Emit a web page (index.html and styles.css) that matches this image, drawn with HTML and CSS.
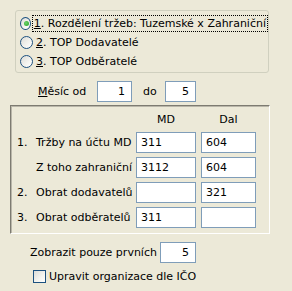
FILE: index.html
```html
<!DOCTYPE html>
<html lang="cs">
<head>
  <meta charset="UTF-8" />
  <title>Přehled tržeb</title>
  <link rel="stylesheet" href="styles.css">
</head>
<body>
<div class="group">
  <label class="radio-row">
    <span class="radio checked"></span>
    <span class="radio-text focus"><u>1</u>. Rozdělení tržeb: Tuzemské x Zahraniční</span>
  </label>
  <label class="radio-row">
    <span class="radio"></span>
    <span class="radio-text"><u>2</u>. TOP Dodavatelé</span>
  </label>
  <label class="radio-row">
    <span class="radio"></span>
    <span class="radio-text"><u>3</u>. TOP Odběratelé</span>
  </label>
</div>

<div class="month-row">
  <span class="month-label"><u>M</u>ěsíc od</span>
  <span class="field month-from">1</span>
  <span class="month-to">do</span>
  <span class="field month-until">5</span>
</div>

<div class="accounts">
  <div class="acc-head">
    <span></span><span></span>
    <span class="col-title">MD</span>
    <span class="col-title">Dal</span>
  </div>
  <div class="acc-row">
    <span class="num">1.</span>
    <span class="name">Tržby na účtu MD</span>
    <span class="field acc">311</span>
    <span class="field acc">604</span>
  </div>
  <div class="acc-row">
    <span class="num"></span>
    <span class="name">Z toho zahraniční</span>
    <span class="field acc">3112</span>
    <span class="field acc">604</span>
  </div>
  <div class="acc-row">
    <span class="num">2.</span>
    <span class="name">Obrat dodavatelů</span>
    <span class="field acc"></span>
    <span class="field acc">321</span>
  </div>
  <div class="acc-row">
    <span class="num">3.</span>
    <span class="name">Obrat odběratelů</span>
    <span class="field acc">311</span>
    <span class="field acc"></span>
  </div>
</div>

<div class="top-row">
  <span class="top-label">Zobrazit pouze prvních</span>
  <span class="field top-count">5</span>
</div>

<label class="check-row">
  <span class="checkbox"></span>
  <span>Upravit organizace dle IČO</span>
</label>
</body>
</html>
```

FILE: styles.css
```css
body {
  margin: 0;
  width: 292px;
  height: 291px;
  background: #ece9d8;
  color: #000;
  font-family: Tahoma, "DejaVu Sans", "Liberation Sans", sans-serif;
  font-size: 11px;
  overflow: hidden;
}
u { text-decoration: underline; text-underline-offset: 1px; }

/* radio group */
.group {
  margin: 10px 0 0 15px;
  width: 254px;
  height: 61px;
  padding: 3px 0 0 4px;
  box-sizing: border-box;
  border: 1px solid #d0d0bf;
  border-radius: 3px;
  height: 63px;
}
.radio-row {
  display: flex;
  align-items: center;
  height: 19px;
}
.radio {
  width: 13px;
  height: 13px;
  box-sizing: border-box;
  border: 1px solid #1c5180;
  border-radius: 50%;
  background: linear-gradient(135deg, #dcdcd7 0%, #f4f4f0 60%, #ffffff 100%);
  margin-right: 1px;
  position: relative;
}
.radio.checked::after {
  content: "";
  position: absolute;
  left: 3px;
  top: 3px;
  width: 5px;
  height: 5px;
  border-radius: 50%;
  background: radial-gradient(circle at 40% 40%, #6dd26d, #21a121);
}
.radio-text {
  padding: 1px 1px 1px 1px;
  border: 1px dotted transparent;
  line-height: 13px;
  white-space: nowrap;
}
.radio-text.focus { border-color: #000; }

/* month range */
.month-row {
  display: flex;
  align-items: center;
  margin-top: 8px;
  height: 21px;
}
.month-label { width: 59px; padding-left: 38px; }
.month-to { width: 22px; padding-left: 11px; }
.field {
  display: block;
  height: 21px;
  box-sizing: border-box;
  border: 1px solid #7f9db9;
  background: #fff;
  line-height: 19px;
  padding: 0 4px;
  white-space: nowrap;
}
.month-from { width: 35px; text-align: right; padding-right: 6px; }
.month-until { width: 31px; text-align: right; padding-right: 6px; }

/* account table */
.accounts {
  margin: 3px 0 0 10px;
  width: 260px;
  height: 129px;
  box-sizing: border-box;
  border-top: 1px solid #7d7b71;
  border-left: 1px solid #7d7b71;
  border-right: 1px solid #fff;
  border-bottom: 1px solid #fff;
  box-shadow: inset 1px 1px 0 #b9b6a9;
  padding: 0 0 0 6px;
}
.acc-head, .acc-row {
  display: grid;
  grid-template-columns: 19px 100px 60px 60px;
  column-gap: 0;
}
.acc-head {
  height: 26px;
  align-items: center;
}
.acc-head .col-title { text-align: center; }
.acc-head .col-title:last-child { margin-left: 5px; }
.acc-row {
  height: 21px;
  margin-bottom: 4px;
  align-items: center;
}
.acc-row .field:last-child { margin-left: 5px; }

/* bottom options */
.top-row {
  display: flex;
  align-items: center;
  margin-top: 8px;
  height: 21px;
}
.top-label { width: 130px; padding-left: 30px; }
.top-count { width: 36px; text-align: right; padding-right: 6px; }

.check-row {
  display: flex;
  align-items: center;
  margin: 4px 0 0 33px;
  height: 19px;
}
.checkbox {
  width: 13px;
  height: 13px;
  box-sizing: border-box;
  border: 1px solid #1c5180;
  background: linear-gradient(135deg, #dcdcd7 0%, #f4f4f0 60%, #ffffff 100%);
  margin-right: 3px;
}
```
